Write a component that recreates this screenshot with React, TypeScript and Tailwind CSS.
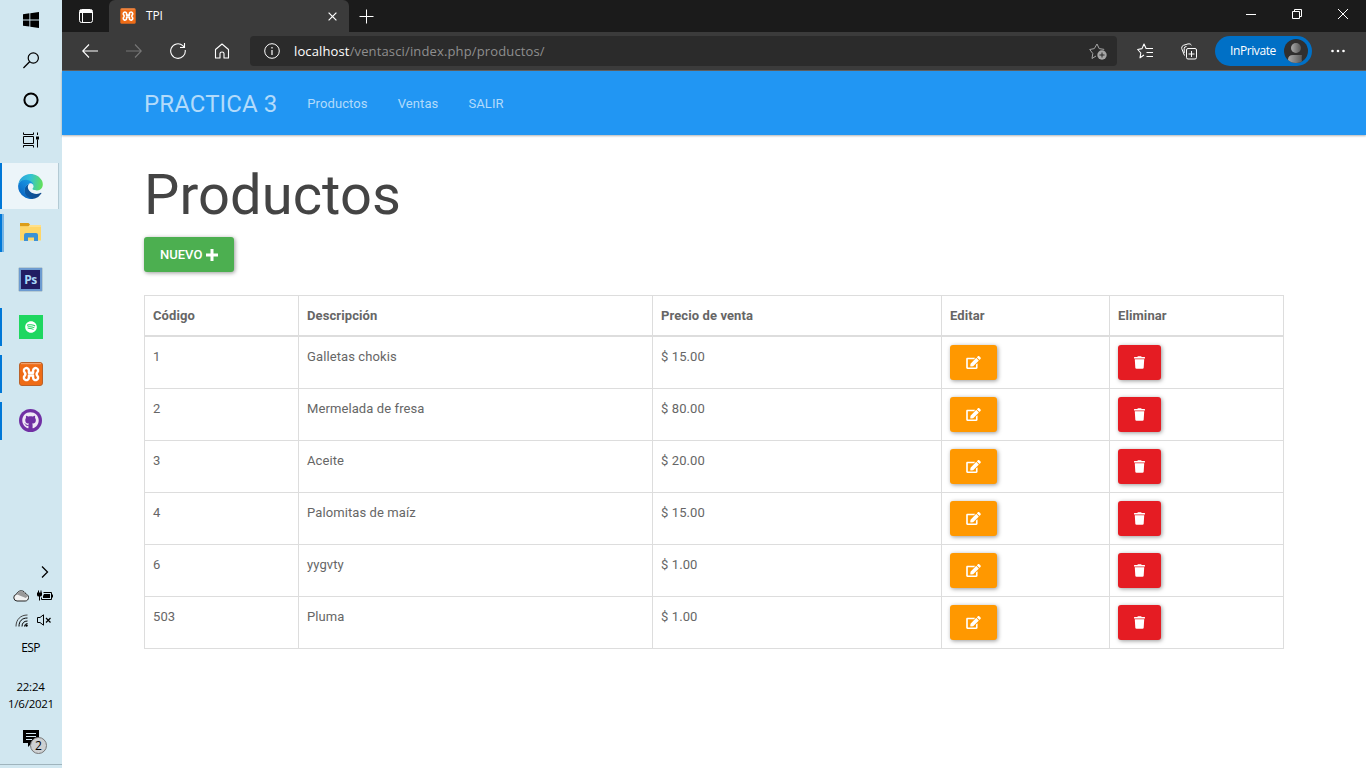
import React from "react";
import { FaEdit, FaTrash, FaGithub, FaSpotify } from "react-icons/fa";

const products = [
  { code: "1", name: "Galletas chokis", price: "$ 15.00" },
  { code: "2", name: "Mermelada de fresa", price: "$ 80.00" },
  { code: "3", name: "Aceite", price: "$ 20.00" },
  { code: "4", name: "Palomitas de maíz", price: "$ 15.00" },
  { code: "6", name: "yygvty", price: "$ 1.00" },
  { code: "503", name: "Pluma", price: "$ 1.00" },
];

function EdgeLogo() {
  return (
    <svg width="25" height="25" viewBox="0 0 257 259">
      <defs>
        <linearGradient id="e1" x1="63" y1="177" x2="241" y2="177" gradientUnits="userSpaceOnUse">
          <stop offset="0" stopColor="#0c59a4" />
          <stop offset="1" stopColor="#114a8b" />
        </linearGradient>
        <linearGradient id="e2" x1="157" y1="80" x2="46" y2="220" gradientUnits="userSpaceOnUse">
          <stop offset="0" stopColor="#1b9de2" />
          <stop offset="0.5" stopColor="#1383d8" />
          <stop offset="1" stopColor="#0a6ac4" />
        </linearGradient>
        <linearGradient id="e3" x1="10" y1="70" x2="250" y2="110" gradientUnits="userSpaceOnUse">
          <stop offset="0" stopColor="#2ba5dc" />
          <stop offset="0.45" stopColor="#32c1d5" />
          <stop offset="1" stopColor="#62e05a" />
        </linearGradient>
      </defs>
      <path fill="url(#e1)" d="M235.68 195.46a93.73 93.73 0 0 1-10.54 4.71 101.87 101.87 0 0 1-35.9 6.46c-47.32 0-88.54-32.55-88.54-74.32A31.48 31.48 0 0 1 117.13 105.09c-42.8 1.8-53.8 46.4-53.8 72.53 0 73.88 68.09 81.37 82.76 81.37 7.91 0 19.84-2.3 27-4.56l1.31-.44a128.34 128.34 0 0 0 66.6-52.8 4 4 0 0 0-5.32-5.75z" />
      <path fill="url(#e2)" d="M105.73 241.42A79.2 79.2 0 0 1 83 220.08a80.72 80.72 0 0 1 29.5-120c3.12-1.47 8.45-4.13 15.54-4a32.35 32.35 0 0 1 25.69 13 31.88 31.88 0 0 1 6.36 18.66c0-.21 24.46-79.6-80-79.6-43.9 0-80 41.66-80 78.21a130.15 130.15 0 0 0 12.11 56 128 128 0 0 0 156.38 67.11 75.55 75.55 0 0 1-62.78-8z" />
      <path fill="url(#e3)" d="M152.33 148.86c-.81 1.05-3.3 2.5-3.3 5.66 0 2.61 1.7 5.12 4.72 7.23 14.38 10 41.49 8.68 41.56 8.68a59.56 59.56 0 0 0 30.27-8.35 61.38 61.38 0 0 0 30.43-52.88c.26-22.41-8-37.31-11.34-43.91C223.46 23.84 177.72 0 128 0A128 128 0 0 0 0 126.2c.48-36.54 36.8-66.05 80-66.05 3.5 0 23.46.34 42 10.07 16.34 8.58 24.9 18.94 30.85 29.21 6.18 10.67 7.28 24.15 7.28 29.52s-2.74 13.33-7.8 19.91z" />
    </svg>
  );
}

function XamppLogo({ size }: { size: number }) {
  return (
    <svg width={size} height={size} viewBox="0 0 24 24">
      <rect x="0.5" y="0.5" width="23" height="23" rx="2.5" fill="#ef6c16" stroke="#b9622a" />
      <path d="M2 1.6H22" stroke="#f0a06c" strokeWidth="1.2" />
      <path
        d="M9.900 10.700V8.500A2.500 2.500 0 1 0 5.600 10.300Q7.200 12 5.600 13.900A2.500 2.500 0 1 0 9.900 15.700V13.500H14.100V15.700A2.500 2.500 0 1 0 18.400 13.900Q16.800 12 18.400 10.300A2.500 2.500 0 1 0 14.100 8.500V10.700Z"
        fill="none"
        stroke="#fff"
        strokeWidth="2.400"
        strokeLinejoin="round"
      />
    </svg>
  );
}

function TaskItem({ children, bar }: { children: React.ReactNode; bar?: boolean }) {
  return (
    <div className="flex h-[47px] w-full items-center">
      <div className={bar ? "h-[38px] w-0.5 bg-[#0078d7]" : "h-[38px] w-0.5"} />
      <div className="flex w-[58px] justify-center pr-px">{children}</div>
    </div>
  );
}

function Taskbar() {
  return (
    <aside className="flex h-full w-[62px] shrink-0 flex-col bg-[#d1e7f0] font-['Open_Sans',sans-serif] text-black">
      <div className="flex h-[163px] flex-col items-center">
        <div className="flex h-10 items-center">
          <svg width="16" height="16" viewBox="0 0 16 16">
            <path d="M0 2.200 6.400 1.300V7.400H0zM7.300 1.200 16 0v7.400H7.300zM0 8.400h6.400v6.200L0 13.700zM7.300 8.400H16V16l-8.700-1.200z" />
          </svg>
        </div>
        <div className="flex h-10 items-center">
          <svg width="16" height="17" viewBox="0 0 16 17" fill="none" stroke="#000" strokeWidth="1.200">
            <circle cx="10.300" cy="6" r="5.100" />
            <path d="M6.600 9.700.400 16" strokeWidth="1.400" />
          </svg>
        </div>
        <div className="flex h-10 items-center">
          <svg width="16" height="16" viewBox="0 0 16 16" fill="none" stroke="#000" strokeWidth="2">
            <circle cx="8" cy="8" r="6.600" />
          </svg>
        </div>
        <div className="flex h-10 items-center pb-px">
          <svg width="16" height="16" viewBox="0 0 16 16" fill="none" stroke="#000">
            <path d="M.5 .500v2h10v-2M.5 15.500v-2h10v2M.5 4.500h10v7H.500zM14.500 .500v2.500M14.500 7.500V15.500" />
            <path fill="#000" stroke="none" d="M13 4.500h3v3h-3z" />
          </svg>
        </div>
      </div>
      <div className="flex h-[46px] w-full">
        <div className="w-0.5 bg-[#0078d7]" />
        <div className="flex w-14 items-center justify-center bg-[#ecf5f9] pl-px">
          <EdgeLogo />
        </div>
        <div className="w-px bg-[#b3cad4]" />
      </div>
      <div className="flex h-[47px] w-full items-center">
        <div className="h-[38px] w-0.5 bg-[#0078d7]" />
        <div className="h-[38px] w-0.5 bg-[#76b5e5]" />
        <div className="flex w-[54px] justify-center">
          <svg width="22" height="19" viewBox="0 0 22 19">
            <path fill="#ffd667" d="M0 2h21v15.500H0z" />
            <path fill="#dc9d18" d="M0 0h8.500l1.500 1.500-1.500 2H0z" />
            <path fill="#ffe08a" d="M0 3.500h8.500L10 2h11v2H0z" />
            <path fill="#3c91d5" d="M4 18V12q0-2 2-2h10q2 0 2 2v6h-4V14.500H8V18z" />
          </svg>
        </div>
      </div>
      <TaskItem>
        <div className="flex h-[23px] w-[23px] items-center justify-center border-2 border-[#6d9bd0] bg-[#211c62] text-[12px] font-bold leading-none tracking-[-0.500px] text-[#a9d8f7] shadow-[0_0_1px_#345]">
          Ps
        </div>
      </TaskItem>
      <TaskItem bar>
        <div className="flex h-6 w-6 items-center justify-center bg-[#1ed760]">
          <FaSpotify size={12} color="#fff" />
        </div>
      </TaskItem>
      <TaskItem bar>
        <XamppLogo size={24} />
      </TaskItem>
      <TaskItem bar>
        <div className="flex h-[23px] w-[23px] items-center justify-center rounded-full bg-[#7130a4]">
          <FaGithub size={17} color="#efe8f5" />
        </div>
      </TaskItem>
      <div className="mt-[121px] flex h-[14px] justify-end pr-[13px]">
        <svg width="8" height="14" viewBox="0 0 8 14" fill="none" stroke="#000" strokeWidth="1.3">
          <path d="m1 1.500 5.500 5.500L1 12.500" />
        </svg>
      </div>
      <div className="mt-[11px] flex h-3 items-center justify-between pl-[13px] pr-[9px]">
        <svg width="16" height="12" viewBox="0 0 16 12">
          <path d="M4 11a3.400 3.400 0 0 1-.6-6.700C4.200 2 6.200.800 8.200.800c2.200 0 3.800 1.200 4.400 3.200 1.600.200 2.900 1.500 2.900 3.400 0 2.200-1.400 3.600-3.300 3.600z" fill="#f2f2f2" stroke="#222" />
          <path d="M2 5C3.500 4 5 4.500 6 5.200L12.800 8 15 6 12.500 4.200C12 2.200 10.300 1.200 8.200 1.200S4 2.500 3.500 4.500z" fill="#999" />
        </svg>
        <svg width="16" height="12" viewBox="0 0 16 12">
          <path d="M6.500 2.500h8v7h-10V7.500" fill="none" stroke="#000" />
          <path d="M7 4h6v4H6V6zM15 4.500h1v3h-1zM0 2.500h5V5Q5 6.500 3 6.500V10.500H2V6.500Q0 6.500 0 5zM1 .500h1v2H1zM3.500.500h1v2h-1z" />
        </svg>
      </div>
      <div className="mt-3 flex h-[13px] items-center justify-between pl-[15px] pr-[10px]">
        <svg width="14" height="13" viewBox="0 0 14 13" fill="none" stroke="#000">
          <path d="M1 12.500C1 5.500 5.500 1 12.500 1" stroke="#444" />
          <path d="M4 12.500C4 7 7 4 12.500 4M7 12.500C7 9 9 7 12.500 7" />
          <path d="M9.500 12.500c0-2 1.500-3 3-3" />
          <circle cx="11.500" cy="11.500" r="1.200" fill="#000" stroke="none" />
        </svg>
        <svg className="mb-px" width="15" height="12" viewBox="0 0 15 12" fill="none" stroke="#000">
          <path d="M.5 3.500H3L6.500.800v10.400L3 8.500H.500z" />
          <path d="m9 4 4.500 4.500M13.500 4 9 8.500" strokeWidth="1.200" />
        </svg>
      </div>
      <div className="mt-[13px] flex h-4 items-center justify-center pr-px text-[12px] tracking-[-0.600px]">ESP</div>
      <div className="mt-[22px] text-center text-[11.500px] leading-[17px] tracking-[-0.250px]">
        <div className="pr-px">22:24</div>
        <div>1/6/2021</div>
      </div>
      <div className="mt-[18px] h-[34px] pl-[23px]">
        <div className="relative h-6 w-6">
          <svg width="16" height="17" viewBox="0 0 16 17">
            <path d="M0 0h16v13H9l-4 4v-4H0z" />
            <path d="M3 3.500h10M3 6.500h10M3 9.500h6" stroke="#d1e7f0" />
          </svg>
          <div className="absolute left-[7px] top-[7px] flex h-[17px] w-[17px] items-center justify-center rounded-full border border-[#777] bg-[#cdd0d2] text-[12px] leading-none">2</div>
        </div>
      </div>
      <div className="h-px bg-[#9fb4bd]" />
    </aside>
  );
}

function BrowserChrome() {
  return (
    <header className="h-[71px] font-['Open_Sans',sans-serif] text-white">
      <div className="flex h-8 bg-[#1b1b1b]">
        <div className="flex w-[47px] items-center pl-[17px]">
          <svg width="14" height="14" viewBox="0 0 14 14">
            <rect x=".5" y=".5" width="13" height="13" rx="2" fill="none" stroke="#fff" />
            <path d="M1 1h12v3H1zM3 4h1v9H3z" fill="#fff" />
          </svg>
        </div>
        <div className="flex w-[240px] items-center rounded-t-md bg-[#3b3b3b] pl-[11px] pr-3">
          <XamppLogo size={16} />
          <span className="ml-2.5 flex-1 text-[12px] tracking-[-0.200px]">TPI</span>
          <svg width="9" height="9" viewBox="0 0 9 9" stroke="#fff" strokeWidth="1.200">
            <path d="m.6.600 7.800 7.800M8.400.600.600 8.400" />
          </svg>
        </div>
        <div className="flex flex-1 items-center pl-2.5">
          <svg width="15" height="15" viewBox="0 0 15 15" stroke="#fff">
            <path d="M7.500.500v14M.500 7.500h14" />
          </svg>
        </div>
        <div className="flex items-center pb-1 pr-[18px]">
          <svg width="10" height="10" viewBox="0 0 10 10" stroke="#fff">
            <path d="M0 5.500h10" />
          </svg>
          <svg className="ml-9" width="10" height="10" viewBox="0 0 10 10" fill="none" stroke="#fff">
            <path d="M.5 2.500h7v7h-7zM2.500 2.500v-2h7v7h-2" />
          </svg>
          <svg className="ml-9" width="10" height="10" viewBox="0 0 10 10" stroke="#fff">
            <path d="m0 0 10 10M10 0 0 10" />
          </svg>
        </div>
      </div>
      <div className="flex h-[39px] items-center border-b border-[#606060] bg-[#3b3b3b]">
        <svg className="ml-5" width="16" height="14" viewBox="0 0 16 14" fill="none" stroke="#fff" strokeWidth="1.100">
          <path d="M7 .500.700 7 7 13.500M1 7h15" />
        </svg>
        <svg className="ml-7" width="16" height="14" viewBox="0 0 16 14" fill="none" stroke="#777" strokeWidth="1.100">
          <path d="m9 .500 6.300 6.500L9 13.500M15 7H0" />
        </svg>
        <svg className="ml-7" width="16" height="16" viewBox="0 0 16 16" fill="none" stroke="#fff" strokeWidth="1.100">
          <path d="M15.200 7A7.300 7.300 0 1 1 12.800 2.600L14.500 4.500M14.500 0v4.500H10" />
        </svg>
        <svg className="ml-7" width="16" height="16" viewBox="0 0 16 16" fill="none" stroke="#fff" strokeWidth="1.100">
          <path d="M1.500 6.500 8 1l6.500 5.500V15H10V10.500Q10 9 8 9t-2 1.500V15H1.500z" strokeLinejoin="round" />
        </svg>
        <div className="ml-5 flex h-[30px] w-[867px] items-center rounded bg-[#2b2b2b] pl-3.5 pr-2.5">
          <svg width="16" height="16" viewBox="0 0 16 16" fill="none" stroke="#fff">
            <circle cx="8" cy="8" r="7.300" />
            <path d="M8 7v5M8 4v1.500" strokeWidth="1.200" />
          </svg>
          <div className="ml-3.5 flex-1 pt-px text-[13px] text-[#8f8f8f]">
            <span className="tracking-[0.130px] text-white">localhost</span>
            <span className="tracking-[0.140px]">/ventasci/index.php/productos/</span>
          </div>
          <svg width="18" height="17" viewBox="0 0 18 17" fill="none" stroke="#a5a5a5">
            <path d="m7 13-4 2.500.800-5L.700 6.500l4.600-.900L8 1l2.200 4.600 5 .800" strokeLinejoin="round" />
            <circle cx="13" cy="12" r="4.700" fill="#a5a5a5" stroke="none" />
            <path d="M13 9.500v5M10.500 12h5" stroke="#2b2b2b" />
          </svg>
        </div>
        <svg className="ml-5" width="17" height="16" viewBox="0 0 17 16" fill="none" stroke="#fff" strokeWidth="1.100">
          <path d="M7 12 3 14.800l.800-4.800L.700 6.500l4.300-.900L7 1l2.100 4.500H16M9.500 9.500H16M9.500 13.500H16" strokeLinejoin="round" />
        </svg>
        <svg className="ml-[27px]" width="16" height="17" viewBox="0 0 16 17" fill="none" stroke="#fff">
          <path d="M3.500 12.500.700 5.500Q.300 3.200 2.500 2.300L7 .900Q9.500.300 10.500 2.200M3.200 10V5.500Q3.200 3.500 5.500 3.500" />
          <rect x="5.500" y="5.500" width="10" height="10.500" rx="1.500" />
          <path d="M10.500 8v6M7.500 11h6" />
        </svg>
        <div className="ml-[18px] flex h-[30px] w-[97px] items-center rounded-full bg-[#0070c6] pl-[15px]">
          <span className="w-[54px] text-[12px] tracking-[-0.400px]">InPrivate</span>
          <svg width="24" height="24" viewBox="0 0 24 24">
            <defs>
              <linearGradient id="av">
                <stop offset="0" stopColor="#aaa" />
                <stop offset="1" stopColor="#555" />
              </linearGradient>
              <clipPath id="avc"><circle cx="12" cy="12" r="12" /></clipPath>
            </defs>
            <g clipPath="url(#avc)">
              <rect width="24" height="24" fill="#302f2f" />
              <circle cx="12" cy="9" r="5" fill="url(#av)" />
              <path d="M4 24v-3q0-5 5-5h9q-1 5 1 8z" fill="url(#av)" />
            </g>
          </svg>
        </div>
        <svg className="ml-[19px]" width="14" height="4" viewBox="0 0 14 4" fill="#fff">
          <circle cx="1.500" cy="2" r="1.300" /><circle cx="7" cy="2" r="1.300" /><circle cx="12.500" cy="2" r="1.300" />
        </svg>
      </div>
    </header>
  );
}

const btn = "inline-flex h-[35px] items-center rounded-[3px] px-4 text-[13px] font-medium text-white shadow-[1px_1px_4px_rgba(0,0,0,0.4)]";

export default function App() {
  return (
    <div className="flex h-[768px] w-[1366px] overflow-hidden bg-white">
      <Taskbar />
      <div className="flex min-w-0 flex-1 flex-col">
        <BrowserChrome />
        <div className="flex-1 font-[Roboto,sans-serif] text-[13px] tracking-[0.100px] text-[#666]">
          <nav className="flex h-16 items-center bg-[#2196f3] pl-[82px] pt-0.5 text-[#b2dbfb] shadow-[0_1px_2px_rgba(0,0,0,0.3)]">
            <span className="text-[24px]">PRACTICA 3</span>
            <span className="ml-[30px]">Productos</span>
            <span className="ml-[30px]">Ventas</span>
            <span className="ml-[30px]">SALIR</span>
          </nav>
          <main className="pl-[82px] pt-[29px]">
            <h1 className="h-[62px] text-[56px] leading-[62px] text-[#444]">Productos</h1>
            <div className="mt-[11px] flex">
              <button className={btn + " gap-1 bg-[#4caf50] tracking-normal"}>
                NUEVO
                <svg width="12" height="12" viewBox="0 0 12 12" fill="#fff">
                  <path d="M4.500 0h3v4.500H12v3H7.500V12h-3V7.500H0v-3h4.500z" />
                </svg>
              </button>
            </div>
            <table className="mt-[23px] w-[1140px] table-fixed border-collapse border border-[#ddd]">
              <colgroup>
                <col className="w-[154px]" />
                <col className="w-[354px]" />
                <col className="w-[289px]" />
                <col className="w-[168px]" />
                <col className="w-[174px]" />
              </colgroup>
              <thead>
                <tr className="h-10 border-b-2 border-[#ddd] text-left">
                  {["Código", "Descripción", "Precio de venta", "Editar", "Eliminar"].map((h) => (
                    <th key={h} className="border-x border-[#ddd] px-2 pt-px font-bold">{h}</th>
                  ))}
                </tr>
              </thead>
              <tbody>
                {products.map((p, row) => (
                  <tr key={p.code} className={(row === 0 ? "h-[53px]" : "h-[52px]") + " border-b border-[#ddd] align-top"}>
                    {[p.code, p.name, p.price].map((v, i) => (
                      <td key={i} className="border-x border-[#ddd] px-2 pt-2 leading-[24px]">{v}</td>
                    ))}
                    <td className="border-x border-[#ddd] px-2 pt-2 leading-none">
                      <button className={btn + " bg-[#ff9800]"}><FaEdit className="h-[13px] w-[15px]" /></button>
                    </td>
                    <td className="border-x border-[#ddd] px-2 pt-2 leading-none">
                      <button className={btn + " bg-[#e51c23]"}><FaTrash className="h-[13px] w-[11px]" /></button>
                    </td>
                  </tr>
                ))}
              </tbody>
            </table>
          </main>
        </div>
      </div>
    </div>
  );
}
